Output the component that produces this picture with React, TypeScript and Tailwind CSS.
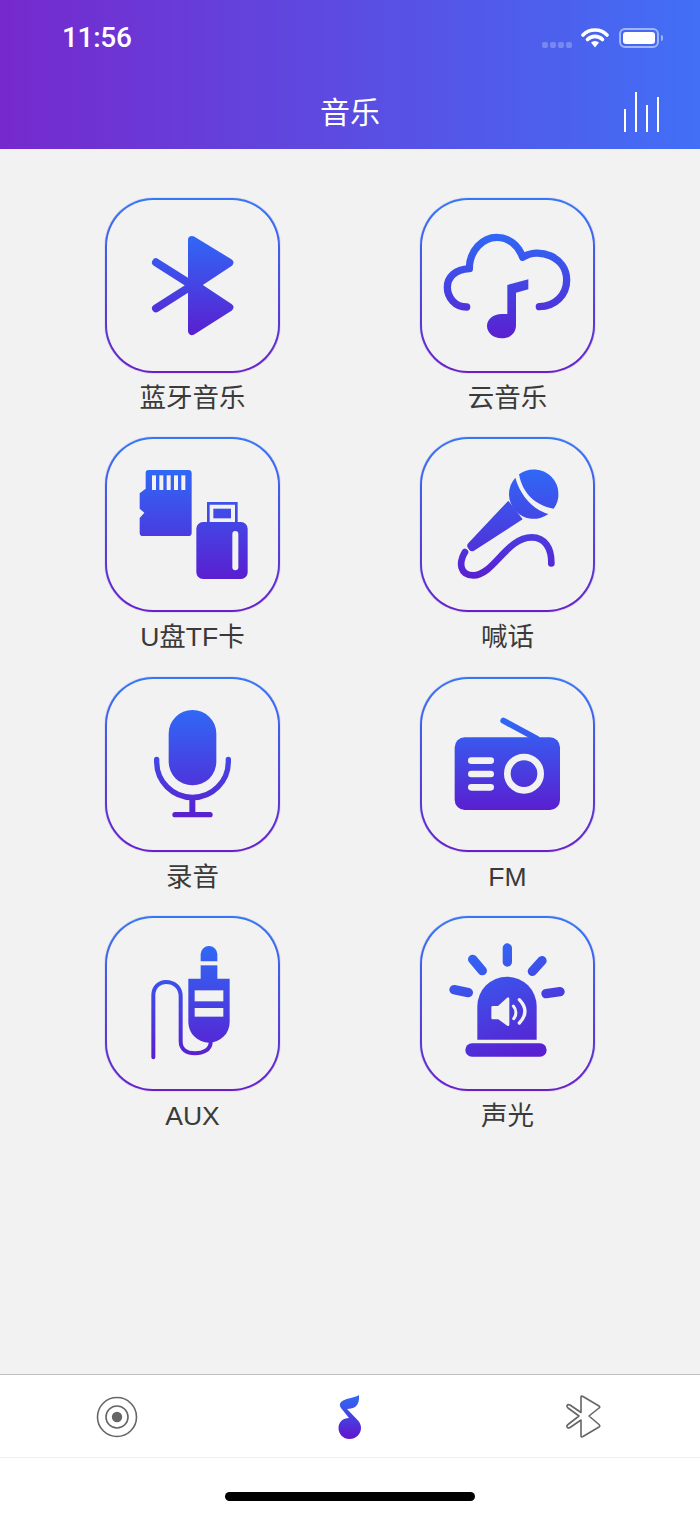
import React from 'react';

const BG = '#f2f2f2';

const TOP = '36 30 513 513';
const MID = '36 27 513 513';

const Grad = ({ id, y1, y2 }: { id: string; y1: number; y2: number }) => (
  <defs>
    <linearGradient id={id} gradientUnits="userSpaceOnUse" x1="0" y1={y1} x2="0" y2={y2}>
      <stop offset="0" stopColor="#3068f6" />
      <stop offset="1" stopColor="#5a1fd0" />
    </linearGradient>
  </defs>
);

const BluetoothIcon = () => (
  <svg viewBox={TOP} className="w-full h-full">
    <Grad id="g-bt" y1={138} y2={436} />
    <path d="M291 150 L403 218 L302 285 L403 352 L291 423 Z" fill="url(#g-bt)" stroke="url(#g-bt)" strokeWidth="24" strokeLinejoin="round" />
    <path d="M183 217 L295 288 M183 355 L295 284" fill="none" stroke="url(#g-bt)" strokeWidth="24" strokeLinecap="round" />
  </svg>
);

const CloudIcon = () => (
  <svg viewBox={TOP} className="w-full h-full">
    <Grad id="g-cloud" y1={132} y2={446} />
    <path
      d="M170 351 C135 351 112 322 112 292 C112 262 135 238 178 236 C178 180 220 142 260 142 C295 142 325 165 338 202 C385 170 470 200 470 270 C470 315 435 350 388 350"
      fill="none"
      stroke="url(#g-cloud)"
      strokeWidth="22"
      strokeLinecap="round"
      strokeLinejoin="round"
    />
    <path d="M292 285 L355 268 V298 L318 308 V405 C318 430 300 445 275 445 C250 445 231 428 231 408 C231 388 250 372 275 372 H292 Z" fill="url(#g-cloud)" />
  </svg>
);

const StorageIcon = () => (
  <svg viewBox={MID} className="w-full h-full">
    <Grad id="g-sd" y1={120} y2={447} />
    <path
      d="M160 120 H280 Q290 120 290 130 V308 Q290 318 280 318 H144 Q134 318 134 308 V264 L148 248 L134 236 V190 L152 176 V128 Q152 120 160 120 Z"
      fill="url(#g-sd)"
    />
    {[171, 193, 215, 237, 259].map(x => (
      <rect key={x} x={x} y={136} width={12} height={44} fill={BG} />
    ))}
    <rect x="304" y="276" width="154" height="171" rx="20" fill="url(#g-sd)" />
    <rect x="412" y="303" width="18" height="118" rx="9" fill={BG} />
    <path d="M340 276 V220 H424 V276" fill="none" stroke="url(#g-sd)" strokeWidth="8" />
    <rect x="355" y="236" width="53" height="29" fill="url(#g-sd)" />
  </svg>
);

const KaraokeIcon = () => (
  <svg viewBox={MID} className="w-full h-full">
    <Grad id="g-ktv" y1={120} y2={446} />
    <path d="M327 133 A74 74 0 0 1 431 236 C382 228 338 195 327 133 Z" fill="url(#g-ktv)" />
    <path d="M316 143 A74 74 0 0 0 415 252 C372 240 332 200 316 143 Z" fill="url(#g-ktv)" />
    <path d="M295 212 L338 268 L192 362 Q184 366 178 360 L174 354 Q168 346 176 338 Z" fill="url(#g-ktv)" />
    <path
      d="M165 366 C145 400 150 436 190 436 C250 436 290 322 365 322 C405 322 425 355 424 400"
      fill="none"
      stroke="url(#g-ktv)"
      strokeWidth="20"
      strokeLinecap="round"
    />
  </svg>
);

const MicIcon = () => (
  <svg viewBox={MID} className="w-full h-full">
    <Grad id="g-mic" y1={120} y2={442} />
    <rect x="221" y="120" width="143" height="226" rx="71" fill="url(#g-mic)" />
    <path d="M185 268 V275 A107 107 0 0 0 400 275 V268" fill="none" stroke="url(#g-mic)" strokeWidth="16" strokeLinecap="round" />
    <path d="M292 383 V434" fill="none" stroke="url(#g-mic)" strokeWidth="18" />
    <path d="M240 434 H345" fill="none" stroke="url(#g-mic)" strokeWidth="16" strokeLinecap="round" />
  </svg>
);

const RadioIcon = () => (
  <svg viewBox={MID} className="w-full h-full">
    <Grad id="g-fm" y1={143} y2={420} />
    <path d="M280 152 L380 206" fill="none" stroke="url(#g-fm)" strokeWidth="18" strokeLinecap="round" />
    <rect x="134" y="202" width="316" height="218" rx="30" fill="url(#g-fm)" />
    {[262, 302, 342].map(y => (
      <rect key={y} x={174} y={y} width={78} height={20} rx={10} fill={BG} />
    ))}
    <circle cx="342" cy="311" r="50" fill="none" stroke={BG} strokeWidth="20" />
  </svg>
);

const AuxIcon = () => (
  <svg viewBox={TOP} className="w-full h-full">
    <Grad id="g-aux" y1={114} y2={448} />
    <path d="M317 160 V139 A25 25 0 0 1 367 139 V160 Z" fill="url(#g-aux)" />
    <rect x="317" y="172" width="50" height="42" fill="url(#g-aux)" />
    <path d="M280 212 H404 V342 A62 62 0 0 1 280 342 Z" fill="url(#g-aux)" />
    <rect x="299" y="247" width="86" height="33" fill={BG} />
    <rect x="299" y="300" width="86" height="26" fill={BG} />
    <path
      d="M175 448 V262 C175 235 195 222 212 222 C240 222 257 240 257 265 V400 C257 425 275 436 300 436 C325 436 345 425 347 405"
      fill="none"
      stroke="url(#g-aux)"
      strokeWidth="12"
      strokeLinecap="round"
    />
  </svg>
);

const AlarmIcon = () => (
  <svg viewBox={TOP} className="w-full h-full">
    <defs>
      <linearGradient id="g-alarm" gradientUnits="userSpaceOnUse" x1="230" y1="106" x2="350" y2="446">
        <stop offset="0" stopColor="#3068f6" />
        <stop offset="1" stopColor="#5a1fd0" />
      </linearGradient>
    </defs>
    <path
      d="M292 120 V162 M188 154 L217 188 M396 158 L367 190 M132 245 L175 254 M408 257 L450 251"
      fill="none"
      stroke="url(#g-alarm)"
      strokeWidth="28"
      strokeLinecap="round"
    />
    <path d="M202 395 V295 A89 89 0 0 1 380 295 V395 Z" fill="url(#g-alarm)" />
    <rect x="166" y="406" width="244" height="40" rx="20" fill="url(#g-alarm)" />
    <path d="M248 298 H266 L294 272 V350 L266 330 H248 Z" fill={BG} stroke={BG} strokeWidth="8" strokeLinejoin="round" />
    <path d="M310 294 C320 305 320 322 311 332" fill="none" stroke={BG} strokeWidth="9" strokeLinecap="round" />
    <path d="M328 275 C350 298 350 322 328 345" fill="none" stroke={BG} strokeWidth="10" strokeLinecap="round" />
  </svg>
);

const items = [
  { label: '蓝牙音乐', icon: <BluetoothIcon /> },
  { label: '云音乐', icon: <CloudIcon /> },
  { label: 'U盘TF卡', icon: <StorageIcon /> },
  { label: '喊话', icon: <KaraokeIcon /> },
  { label: '录音', icon: <MicIcon /> },
  { label: 'FM', icon: <RadioIcon /> },
  { label: 'AUX', icon: <AuxIcon /> },
  { label: '声光', icon: <AlarmIcon /> },
];

const App = () => {
  return (
    <div className="h-[1515px] flex flex-col bg-white font-['Liberation_Sans','Noto_Sans_CJK_SC',sans-serif]">
      <header className="h-[149px] shrink-0 flex flex-col bg-linear-to-r/srgb from-[#7629cd] to-[#416ff6] text-white">
        <div className="h-[76px] flex items-center justify-between pl-[62px] pr-[37px]">
          <span className="text-[28px] tracking-[-0.3px] font-['Roboto',sans-serif] font-medium leading-none">11:56</span>
          <div className="flex items-center">
            <div className="flex items-end gap-[2px] mt-[13px] mr-[9px]">
              {[0, 1, 2, 3].map(i => (
                <div key={i} className="w-[6px] h-[6px] rounded-[2px] bg-white/25" />
              ))}
            </div>
            <svg viewBox="0 0 28 20" className="w-[28px] h-[20px] mr-[10px]">
              <path d="M2 7 A17 17 0 0 1 26 7" fill="none" stroke="#fff" strokeWidth="3.6" strokeLinecap="round" />
              <path d="M6.5 11.5 A10.5 10.5 0 0 1 21.5 11.5" fill="none" stroke="#fff" strokeWidth="3.6" strokeLinecap="round" />
              <path d="M10 14.5 A6 6 0 0 1 18 14.5 L14 19.5 Z" fill="#fff" />
            </svg>
            <div className="w-[40px] h-[20px] rounded-[6px] border-2 border-white/50 p-[2px]">
              <div className="w-full h-full rounded-[3px] bg-white" />
            </div>
            <div className="w-[2px] h-[6px] ml-[2px] rounded-r-[2px] bg-white/50" />
          </div>
        </div>
        <div className="flex-1 grid grid-cols-[1fr_auto_1fr] items-center pr-[40px]">
          <div />
          <h1 className="text-[30px] font-normal leading-none ml-[40px] mb-[6px] font-['Noto_Sans_CJK_SC',sans-serif]">音乐</h1>
          <svg viewBox="0 0 36 40" className="w-[36px] h-[40px] justify-self-end mt-[-1px]">
            <path d="M1 40 V17 M12 40 V0 M23 40 V13 M34 40 V5" fill="none" stroke="#fff" strokeWidth="2" />
          </svg>
        </div>
      </header>

      <main className="flex-1 bg-[#f2f2f2] px-[35px] pt-[49px]">
        <div className="grid grid-cols-2 grid-rows-[239px_240px_239px_239px]">
          {items.map(item => (
            <div key={item.label} className="flex flex-col items-center">
              <div className="w-[175px] h-[175px] p-[2px] rounded-[48px] bg-linear-to-b/srgb from-[#3478f6] to-[#6a1fc8] shadow-[0_0_1px_#5a50e0]">
                <div className="w-full h-full rounded-[46px] bg-[#f2f2f2]">{item.icon}</div>
              </div>
              <span className="mt-[10px] text-[26.5px] leading-[30px] text-[#3a3a3a]">{item.label}</span>
            </div>
          ))}
        </div>
      </main>

      <nav className="h-[84px] shrink-0 border-t border-b border-t-[#bfbfbf] border-b-[#eeeeee] pt-[1px] grid grid-cols-3 items-center bg-white">
        <svg viewBox="0 0 42 42" className="w-[42px] h-[42px] justify-self-center">
          <circle cx="21" cy="21" r="19.5" fill="none" stroke="#666" strokeWidth="1.6" />
          <circle cx="21" cy="21" r="11" fill="none" stroke="#666" strokeWidth="1.6" />
          <circle cx="21" cy="21" r="5.2" fill="#666" />
        </svg>
        <svg viewBox="0 0 24 44" className="w-[24px] h-[44px] justify-self-center">
          <defs>
            <linearGradient id="g-note" x1="0" y1="0" x2="0" y2="1">
              <stop offset="0" stopColor="#2f6bf6" />
              <stop offset="1" stopColor="#6115cc" />
            </linearGradient>
          </defs>
          <path
            d="M21 0 C17 3 7 3 3 7 C1.5 9 1.5 11 3 13 L11 23 C5 23 0.5 27 0.5 33 C0.5 39 5 44 11.5 44 C18 44 23 39 23 33 C23 30 22 28 20.5 26 L9 14 C16 14 22 11 21 0 Z"
            fill="url(#g-note)"
          />
        </svg>
        <svg viewBox="0 0 37 45" className="w-[37px] h-[45px] justify-self-center">
          <path
            d="M16 3 Q16 1.5 18 2.5 L34 12 Q35.5 13 34 14 L24 22 L34 30.5 Q35.5 32 34 33 L18 42.5 Q16 43.5 16 42 V26 L5 33.5 Q3 34.5 2 33 Q1.5 31.5 3 30.5 L14 22 L3 14 Q1.5 12.5 2 11.5 Q3 10 5 11 L16 18.5 Z"
            fill="none"
            stroke="#666"
            strokeWidth="1.6"
            strokeLinejoin="round"
          />
        </svg>
      </nav>

      <div className="h-[57px] shrink-0 flex justify-center pt-[34px]">
        <div className="w-[250px] h-[9px] rounded-full bg-black" />
      </div>
    </div>
  );
};

export default App;
